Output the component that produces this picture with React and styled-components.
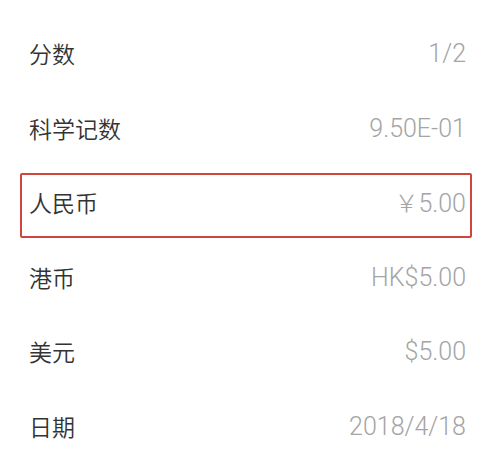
import React from "react";
import styled, { createGlobalStyle } from "styled-components";

const Global = createGlobalStyle`
  html, body { margin: 0; padding: 0; background: #ffffff; }
  body { font-family: "Noto Sans CJK SC", "Noto Sans", sans-serif; }
`;

const List = styled.div`
  width: 481px;
  height: 451px;
  box-sizing: border-box;
  padding: 16.25px 15px 0 29px;
  display: flex;
  flex-direction: column;
  background: #ffffff;
  overflow: hidden;
`;

const Row = styled.div`
  position: relative;
  height: 74.5px;
  flex: none;
  display: flex;
  align-items: center;
  justify-content: space-between;

  ${(p) =>
    p.$highlight &&
    `
    &::after {
      content: "";
      position: absolute;
      top: 8px;
      bottom: 2px;
      left: -9px;
      right: -6px;
      border: 2px solid #d0463f;
      border-radius: 2px;
      pointer-events: none;
    }
  `}
`;

const Label = styled.span`
  font-family: "Noto Sans CJK SC", sans-serif;
  font-size: 23px;
  font-weight: 350;
  color: #333333;
  line-height: 1;
`;

const Value = styled.span`
  font-family: Roboto, "Noto Sans CJK SC", sans-serif;
  font-weight: 300;
  font-size: 25px;
  color: #a4a4a4;
  line-height: 1;
`;

const Yen = styled.span`
  font-family: "Noto Sans CJK SC", sans-serif;
  font-weight: 300;
  font-size: 24px;
`;

const rows = [
  ["分数", "1/2"],
  ["科学记数", "9.50E-01"],
  ["人民币", "5.00", true, true],
  ["港币", "HK$5.00"],
  ["美元", "$5.00"],
  ["日期", "2018/4/18"],
];

export default function App() {
  return (
    <>
      <Global />
      <List>
        {rows.map(([label, value, hl, yen]) => (
          <Row key={label} $highlight={hl}>
            <Label>{label}</Label>
            <Value>
              {yen && <Yen>￥</Yen>}
              {value}
            </Value>
          </Row>
        ))}
      </List>
    </>
  );
}
